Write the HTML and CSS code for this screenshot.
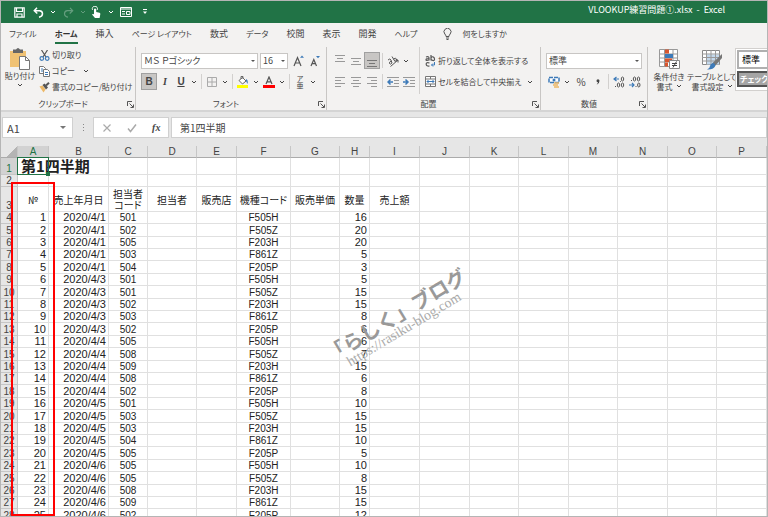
FILE: index.html
```
<!DOCTYPE html>
<html lang="ja">
<head>
  <meta charset="utf-8">
  <meta name="viewport" content="width=device-width, initial-scale=1">
  <title>VLOOKUP練習問題①.xlsx - Excel</title>
  <link rel="stylesheet" href="styles.css">
</head>
<body>
  <svg class="defs" width="0" height="0">
    <symbol id="down" viewBox="0 0 6 6"><path d="M1 2l2 2 2-2" fill="none" stroke="currentColor"/></symbol>
    <symbol id="launcher" viewBox="0 0 7 7"><path d="M.5 5V.5H5M2.500 2.500L6 6M6.500 3.500v3h-3" fill="none" stroke="#555"/></symbol>
  </svg>
  <div class="window">
    <header class="titlebar">
      <div class="quick">
        <button type="button" aria-label="保存"><svg width="11" height="11" viewBox="0 0 11 11"><path d="M.8.8h9.400v9.400H.8zM2.500 1v3.500h6V1M3 10V7h5v3" fill="none" stroke="#fff" stroke-width="1.200"/></svg></button>
        <button type="button" aria-label="元に戻す"><svg width="11" height="11" viewBox="0 0 11 11"><path d="M4 .8L1.300 3.700 4.300 6.500M1.500 3.700H6.500q3 .3 3 3t-3.500 3.500" fill="none" stroke="#fff" stroke-width="1.500"/></svg></button>
        <button type="button" class="caret" aria-label="履歴"><svg width="6" height="6"><use href="#down"/></svg></button>
        <button type="button" class="dim" aria-label="やり直し"><svg width="11" height="11" viewBox="0 0 11 11"><path d="M7 .8l2.700 2.900L6.700 6.500M9.500 3.700H4.500q-3 .3-3 3T5 10.200" fill="none" stroke="#fff" stroke-width="1.200"/></svg></button>
        <button type="button" class="caret dim" aria-label="やり直し履歴"><svg width="6" height="6"><use href="#down"/></svg></button>
        <button type="button" class="touch" aria-label="タッチ"><svg width="11" height="12" viewBox="0 0 11 12"><path d="M1.500 3.800a2.600 2.600 0 1 1 4.800 0" fill="none" stroke="#fff"/><path d="M3 3q1-1.200 2.200 0v3l3.300.8Q9.500 7 9.300 8.200L8.600 12H4L1 8.500q.5-1 2-.3z" fill="#fff"/></svg></button>
        <button type="button" class="caret" aria-label="タッチの設定"><svg width="6" height="6"><use href="#down"/></svg></button>
        <button type="button" aria-label="フォーム"><svg width="12" height="10" viewBox="0 0 12 10"><path d="M.5.5h11v9H.5zM0 2h12M2 4.500h3M2 7h3M6.500 4.500h3.500v3H6.500z" fill="none" stroke="#fff"/></svg></button>
        <button type="button" class="caret last" aria-label="カスタマイズ"><svg width="6" height="6" viewBox="0 0 6 6"><path d="M1 .5h4" stroke="#fff"/><path d="M1 2.500h4L3 5z" fill="#fff"/></svg></button>
      </div>
      <h1>VLOOKUP練習問題①.xlsx&nbsp; -&nbsp; Excel</h1>
    </header>

    <nav class="tabs">
      <a href="#" class="kana">ファイル</a>
      <a href="#" class="kana active">ホーム</a>
      <a href="#">挿入</a>
      <a href="#" class="kana">ページ レイアウト</a>
      <a href="#">数式</a>
      <a href="#" class="kana">データ</a>
      <a href="#">校閲</a>
      <a href="#">表示</a>
      <a href="#">開発</a>
      <a href="#" class="kana">ヘルプ</a>
      <a href="#" class="kana tell"><svg width="9" height="12" viewBox="0 0 9 12"><path d="M3 8.500Q3 7 1.800 6A3.500 3.500 0 1 1 7.200 6Q6 7 6 8.500zM3 10h3M3.500 11.500h2" fill="none" stroke="#555"/></svg>何をしますか</a>
    </nav>

    <div class="ribbon">
      <section class="group clipboard">
        <div class="tools">
          <button type="button" class="big">
            <svg width="22" height="22" viewBox="0 0 22 22"><path d="M1 3h16v16H1z" fill="#f0c274"/><path d="M4 1.500h3q2-3 4 0h3V5H4z" fill="#666"/><path d="M10.500 8.500h6l4 4v9h-10z" fill="#fff" stroke="#777"/><path d="M16.500 8.500v4h4" fill="none" stroke="#777"/></svg>
            <span>貼り付け</span>
            <svg width="6" height="6"><use href="#down"/></svg>
          </button>
          <div class="stack">
            <button type="button"><svg width="11" height="11" viewBox="0 0 11 11"><path d="M2.500 0L7 7M8.500 0L4 7" stroke="#555" stroke-width="1.200"/><circle cx="2.800" cy="8.500" r="1.800" fill="none" stroke="#3d7ab8" stroke-width="1.200"/><circle cx="8.200" cy="8.500" r="1.800" fill="none" stroke="#3d7ab8" stroke-width="1.200"/></svg>切り取り</button>
            <button type="button"><svg width="11" height="11" viewBox="0 0 11 11"><path d="M.5.500h4l2 2v5h-6z" fill="#fff" stroke="#777"/><path d="M4.500 3.500h4l2 2v5h-6z" fill="#fff" stroke="#777"/><path d="M2 3h2M2 5h2M6 6.500h3M6 8.500h3" stroke="#3d7ab8"/></svg>コピー<svg class="gap" width="6" height="6"><use href="#down"/></svg></button>
            <button type="button"><svg width="11" height="11" viewBox="0 0 11 11"><path d="M.5 4.500l3-1 3 4-2 3z" fill="#edb866"/><path d="M3.500 3l2-1.500L9 5.500 7 7.500z" fill="#555"/><path d="M7 3.500L10 .8" stroke="#555" stroke-width="2"/></svg>書式のコピー/貼り付け</button>
          </div>
        </div>
        <footer><span>クリップボード</span><button type="button" aria-label="クリップボードの詳細"><svg width="7" height="7"><use href="#launcher"/></svg></button></footer>
      </section>

      <section class="group font">
        <div class="tools lines">
          <div class="line">
            <label class="pick face"><select aria-label="フォント"><option>ＭＳ Ｐゴシック</option></select></label>
            <label class="pick size"><select aria-label="サイズ"><option>16</option></select></label>
            <button type="button" class="icon" aria-label="拡大"><svg width="12" height="12" viewBox="0 0 12 12"><path d="M1 11L4.500 2.500 8 11M2.300 8h4.400" fill="none" stroke="#555" stroke-width="1.200"/><path d="M7 2.800h4L9 .5z" fill="#3d7ab8"/></svg></button>
            <button type="button" class="icon" aria-label="縮小"><svg width="12" height="12" viewBox="0 0 12 12"><path d="M2 11l2.800-6.500L7.500 11M3 8.700h3.500" fill="none" stroke="#555" stroke-width="1.200"/><path d="M7 1h4L9 3.300z" fill="#3d7ab8"/></svg></button>
          </div>
          <div class="line">
            <button type="button" class="icon on"><b>B</b></button>
            <button type="button" class="icon"><i>I</i></button>
            <button type="button" class="icon"><u>U</u></button>
            <button type="button" class="caret" aria-label="下線"><svg width="6" height="6"><use href="#down"/></svg></button>
            <span class="sep"></span>
            <button type="button" class="icon" aria-label="罫線"><svg width="10" height="10" viewBox="0 0 10 10"><path d="M.5.500h9v9h-9zM5 0v10M0 5h10" fill="none" stroke="#aaa"/></svg></button>
            <button type="button" class="caret" aria-label="罫線の種類"><svg width="6" height="6"><use href="#down"/></svg></button>
            <span class="sep"></span>
            <button type="button" class="icon" aria-label="塗りつぶし"><svg width="12" height="12" viewBox="0 0 12 12"><path d="M2 4.500L5.500 1.500 9 5 5.500 8zM4 3V.5h2V3" fill="#fff" stroke="#666"/><path d="M9 3q2.500 1 1.500 5L9 5z" fill="#3d7ab8"/><path d="M0 9h11v3H0z" fill="#ff0"/></svg></button>
            <button type="button" class="caret" aria-label="塗りつぶしの色"><svg width="6" height="6"><use href="#down"/></svg></button>
            <button type="button" class="icon" aria-label="フォントの色"><svg width="12" height="12" viewBox="0 0 12 12"><path d="M3 8l3-7 3 7M4 5.800h4" fill="none" stroke="#555" stroke-width="1.200"/><path d="M0 9h12v3H0z" fill="red"/></svg></button>
            <button type="button" class="caret" aria-label="色の選択"><svg width="6" height="6"><use href="#down"/></svg></button>
            <span class="sep"></span>
            <button type="button" class="icon ruby"><span>ア</span><span>亜</span></button>
            <button type="button" class="caret" aria-label="ふりがな"><svg width="6" height="6"><use href="#down"/></svg></button>
          </div>
        </div>
        <footer><span>フォント</span><button type="button" aria-label="フォントの詳細"><svg width="7" height="7"><use href="#launcher"/></svg></button></footer>
      </section>

      <section class="group align">
        <div class="tools">
          <div class="lines">
            <div class="line">
              <button type="button" class="icon" aria-label="上揃え"><svg width="10" height="12" viewBox="0 0 10 12"><path d="M0 .5h10M2 3.500h6M0 6.500h10" stroke="#999"/></svg></button>
              <button type="button" class="icon" aria-label="上下中央揃え"><svg width="10" height="12" viewBox="0 0 10 12"><path d="M0 3.500h10M2 6.500h6M0 9.500h10" stroke="#999"/></svg></button>
              <button type="button" class="icon on" aria-label="下揃え"><svg width="10" height="12" viewBox="0 0 10 12"><path d="M0 5.500h10M2 8.500h6M0 11.500h10" stroke="#777"/></svg></button>
              <span class="sep"></span>
              <button type="button" class="icon" aria-label="方向"><svg width="12" height="12" viewBox="0 0 12 12"><path d="M1 5q2-2 3 0l1 3M4 6Q2 7 2.500 8.500T5 8M5 1.500l3 5M6.500 4q2-1.500 3 0T8 6.500M3.500 11.500L11 5M8.500 5H11v2.500" fill="none" stroke="#555"/></svg></button>
              <button type="button" class="caret" aria-label="方向の選択"><svg width="6" height="6"><use href="#down"/></svg></button>
            </div>
            <div class="line">
              <button type="button" class="icon" aria-label="左揃え"><svg width="10" height="10" viewBox="0 0 10 10"><path d="M0 .5h10M0 3.500h6M0 6.500h10M0 9.500h6" stroke="#999"/></svg></button>
              <button type="button" class="icon" aria-label="中央揃え"><svg width="10" height="10" viewBox="0 0 10 10"><path d="M0 .5h10M2 3.500h6M0 6.500h10M2 9.500h6" stroke="#999"/></svg></button>
              <button type="button" class="icon" aria-label="右揃え"><svg width="10" height="10" viewBox="0 0 10 10"><path d="M0 .5h10M4 3.500h6M0 6.500h10M4 9.500h6" stroke="#999"/></svg></button>
              <span class="sep"></span>
              <button type="button" class="icon" aria-label="インデントを減らす"><svg width="12" height="10" viewBox="0 0 12 10"><path d="M0 .5h12M7 3.500h5M7 6.500h5M0 9.500h12" stroke="#999"/><path d="M6 5H1.500M3.500 2.500L1 5l2.500 2.500" fill="none" stroke="#3d7ab8" stroke-width="1.500"/></svg></button>
              <button type="button" class="icon" aria-label="インデントを増やす"><svg width="12" height="10" viewBox="0 0 12 10"><path d="M0 .5h12M7 3.500h5M7 6.500h5M0 9.500h12" stroke="#999"/><path d="M0 5h4.500M2.500 2.500L5 5 2.500 7.500" fill="none" stroke="#3d7ab8" stroke-width="1.500"/></svg></button>
            </div>
          </div>
          <div class="lines wrap">
            <div class="line">
              <button type="button"><svg width="11" height="12" viewBox="0 0 11 12"><path d="M1 2q3-1 3 1v2.500M4 3.500Q1 3.500 1 4.700T4 5M6 0v5.500M6 3q.5-1.500 2-1.200T9.500 4 8 5.500 6 4.500M4.500 8Q1 7 1.200 9.200T4.500 11" fill="none" stroke="#555" stroke-width="1.200"/><path d="M9.500 7v3H6.500M8 8.500L6.500 10 8 11.500" fill="none" stroke="#3d7ab8"/></svg>折り返して全体を表示する</button>
            </div>
            <div class="line">
              <button type="button"><svg width="11" height="11" viewBox="0 0 11 11"><path d="M.5.500h10v10H.5zM0 3h11M0 8h11M5.500 0v3M5.500 8v3" fill="#fff" stroke="#777"/><path d="M2 5.500h7M3.500 4L2 5.500 3.500 7M7.500 4L9 5.500 7.500 7" fill="none" stroke="#3d7ab8"/></svg>セルを結合して中央揃え<svg class="near" width="6" height="6"><use href="#down"/></svg></button>
            </div>
          </div>
        </div>
        <footer><span>配置</span><button type="button" aria-label="配置の詳細"><svg width="7" height="7"><use href="#launcher"/></svg></button></footer>
      </section>

      <section class="group number">
        <div class="tools lines">
          <div class="line">
            <label class="pick"><select aria-label="表示形式"><option>標準</option></select></label>
          </div>
          <div class="line">
            <button type="button" class="icon" aria-label="通貨"><svg width="12" height="12" viewBox="0 0 12 12"><path d="M1 1.500h10v5H1z" fill="#fff" stroke="#3d7ab8" stroke-width="1.500" stroke-dasharray="4 1"/><circle cx="6" cy="4" r="1.500" fill="#3d7ab8"/><path d="M6 7h5M5 9h5M6 11h5" stroke="#edb866" stroke-width="1.500"/></svg></button>
            <button type="button" class="caret" aria-label="通貨の選択"><svg width="6" height="6"><use href="#down"/></svg></button>
            <button type="button" class="icon percent">%</button>
            <button type="button" class="icon"><svg width="4" height="6" viewBox="0 0 4 6"><path d="M.5 1.800a1.500 1.500 0 1 1 3 0Q3.500 4.500 1 5.500L.8 5Q2 4.300 2 3.300.5 3.300.5 1.800z" fill="#444"/></svg></button>
            <span class="sep"></span>
            <button type="button" class="icon" aria-label="小数点以下を増やす"><svg width="12" height="12" viewBox="0 0 12 12"><path d="M6 3H1.500M3.500 1L1 3l2.500 2" fill="none" stroke="#3d7ab8" stroke-width="1.200"/><path d="M7 5.500h.8M2 10.500h1" stroke="#555"/><ellipse cx="9.500" cy="3" rx="1.200" ry="2" fill="none" stroke="#555"/><ellipse cx="5.500" cy="9" rx="1.200" ry="2" fill="none" stroke="#555"/><ellipse cx="9.500" cy="9" rx="1.200" ry="2" fill="none" stroke="#555"/></svg></button>
            <button type="button" class="icon" aria-label="小数点以下を減らす"><svg width="12" height="12" viewBox="0 0 12 12"><path d="M0 9h4.500M3 7l2 2-2 2" fill="none" stroke="#3d7ab8" stroke-width="1.200"/><path d="M2 4.500h1M6.500 10.500h1" stroke="#555"/><ellipse cx="5.500" cy="3" rx="1.200" ry="2" fill="none" stroke="#555"/><ellipse cx="9.500" cy="3" rx="1.200" ry="2" fill="none" stroke="#555"/><ellipse cx="9.800" cy="9" rx="1.200" ry="2" fill="none" stroke="#555"/></svg></button>
          </div>
        </div>
        <footer><span>数値</span><button type="button" aria-label="数値の詳細"><svg width="7" height="7"><use href="#launcher"/></svg></button></footer>
      </section>

      <section class="group styles">
        <div class="tools">
          <button type="button" class="big">
            <svg width="22" height="22" viewBox="0 0 22 22"><path d="M1.500 1.500h18v17h-18z" fill="#fff" stroke="#999"/><path d="M1 6h19M1 10h19M1 14h19M6.500 1v18M15 1v18" stroke="#999"/><path d="M7 1.500h4v4H7zM7 10.500h7v3.500H7zM7 14.500h3v4H7z" fill="#d8562f"/><path d="M7 6h8v4H7z" fill="#3d7ab8"/><path d="M11.500 12.500h10v8h-10z" fill="#fff" stroke="#888"/><path d="M14 15.500h5M14 17.500h5M15 19.500l3.500-6" stroke="#444"/></svg>
            <span>条件付き</span>
            <span>書式<svg class="near" width="6" height="6"><use href="#down"/></svg></span>
          </button>
          <button type="button" class="big">
            <svg width="22" height="22" viewBox="0 0 22 22"><path d="M1.500 2.500h17v14h-17z" fill="#fff" stroke="#888"/><path d="M6 6.500h12v10H6z" fill="#c3d8ec"/><path d="M1 6h18M1 9.500h18M1 13h18M5.500 2v15M10 2v15M14.500 2v15" stroke="#999"/><path d="M21 6v4l-7 8-3-2.500z" fill="#777"/><path d="M12 15q3 1 2 3.500Q12 22 6 21.500q3-1.500 3-3.500t3-3z" fill="#3d7ab8"/></svg>
            <span>テーブルとして</span>
            <span>書式設定<svg class="near" width="6" height="6"><use href="#down"/></svg></span>
          </button>
          <div class="gallery">
            <button type="button" class="normal">標準</button>
            <button type="button" class="check">チェック</button>
          </div>
        </div>
      </section>
    </div>

    <div class="formula">
      <div class="namebox"><input type="text" value="A1" aria-label="名前ボックス"><button type="button" aria-label="名前の一覧"></button></div>
      <span class="dots"><i></i><i></i><i></i></span>
      <div class="entry">
        <button type="button" aria-label="キャンセル"><svg width="10" height="10" viewBox="0 0 10 10"><path d="M1.500 1.500l7 7M8.500 1.500l-7 7" stroke="#aaa" stroke-width="1.200"/></svg></button>
        <button type="button" aria-label="入力"><svg width="10" height="10" viewBox="0 0 10 10"><path d="M1 5.500l2.500 3 5.500-7" fill="none" stroke="#aaa" stroke-width="1.500"/></svg></button>
        <button type="button" class="fx">fx</button>
      </div>
      <input type="text" class="value" value="第1四半期" aria-label="数式バー">
    </div>

    <main class="sheet">
      <table>
        <colgroup>
          <col class="w-head"><col class="w-a"><col class="w-b"><col class="w-c"><col class="w-m"><col class="w-e"><col class="w-f"><col class="w-m"><col class="w-h"><col class="w-l"><col class="w-l"><col class="w-m"><col class="w-l"><col class="w-m"><col class="w-l"><col class="w-m"><col class="w-l">
        </colgroup>
        <thead>
          <tr><th class="corner"></th><th class="picked">A</th><th>B</th><th>C</th><th>D</th><th>E</th><th>F</th><th>G</th><th>H</th><th>I</th><th>J</th><th>K</th><th>L</th><th>M</th><th>N</th><th>O</th><th>P</th></tr>
        </thead>
        <tbody>
          <tr class="row-title"><th class="picked">1</th><td class="cursor"><span>第1四半期</span></td><td></td><td></td><td></td><td></td><td></td><td></td><td></td><td></td><td></td><td></td><td></td><td></td><td></td><td></td><td></td></tr>
          <tr><th>2</th><td></td><td></td><td></td><td></td><td></td><td></td><td></td><td></td><td></td><td></td><td></td><td></td><td></td><td></td><td></td><td></td></tr>
          <tr class="row-names"><th>3</th><td>№</td><td>売上年月日</td><td>担当者<br>コード</td><td>担当者</td><td>販売店</td><td>機種コード</td><td>販売単価</td><td>数量</td><td>売上額</td><td></td><td></td><td></td><td></td><td></td><td></td><td></td></tr>
        </tbody>
        <tbody id="sales"></tbody>
      </table>
      <div class="frame"></div>
      <div class="mark"><p>「らしく」ブログ</p><p class="url">https://rasiku-blog.com</p></div>
    </main>
  </div>
  <script src="sales.js"></script>
</body>
</html>
```
FILE: styles.css
```
*{
  margin: 0;
  padding: 0;
  box-sizing: border-box;
}
body{
  font-family: 'Noto Sans CJK JP',sans-serif;
  font-feature-settings: "palt";
  font-size: 8px;
  line-height: 10px;
  color: #444;
}
button,input,select{
  font: inherit;
  font-feature-settings: inherit;
  color: inherit;
  background: transparent;
  border: none;
  outline: none;
  appearance: none;
}
button{
  display: flex;
  align-items: center;
  justify-content: center;
  white-space: nowrap;
}
svg{
  display: block;
  flex: none;
}
.defs{
  position: absolute;
}
.window{
  display: flex;
  flex-direction: column;
  height: 100vh;
  overflow: hidden;
  border: 1px solid #b5b5b5;
}

/* title bar */
.titlebar{
  display: flex;
  justify-content: space-between;
  height: 22px;
  flex: none;
  background: #217346;
  color: white;
}
.quick{
  display: flex;
  align-items: center;
  padding-left: 10px;
}
.quick button{
  width: 16px;
  margin-right: 3px;
}
.quick .caret{
  width: 8px;
}
.quick .touch{
  margin-left: -2px;
}
.quick .last{
  margin-left: 4px;
}
.quick .dim{
  opacity: 0.3;
}
.titlebar h1{
  font-size: 9px;
  font-weight: 400;
  line-height: 18px;
  padding-right: 42px;
}

/* tabs */
.tabs{
  display: flex;
  flex: none;
  gap: 18px;
  height: 24px;
  padding: 0 0 3px 8px;
  background: #f3f2f1;
}
.tabs a{
  display: flex;
  align-items: center;
  color: #444;
  font-size: 9px;
  text-decoration: none;
  white-space: nowrap;
  border-top: 2px solid transparent;
  border-bottom: 2px solid transparent;
}
.tabs .kana{
  font-size: 8px;
}
.tabs .active{
  font-weight: 700;
  color: #333;
  border-bottom-color: #217346;
}
.tabs .tell{
  margin-left: 8px;
  gap: 10px;
}

/* ribbon */
.ribbon{
  display: flex;
  flex: none;
  height: 63px;
  background: #f3f2f1;
  overflow: hidden;
}
.group{
  display: flex;
  flex-direction: column;
  flex: none;
  border-right: 1px solid #c8c6c4;
}
.group footer{
  display: flex;
  align-items: center;
  height: 12px;
}
.group footer span{
  flex: 1;
  text-align: center;
}
.group footer button{
  width: 10px;
}
.tools{
  display: flex;
  flex: 1;
}
.clipboard{
  width: 135px;
}
.font{
  width: 191px;
}
.align{
  width: 214px;
}
.number{
  width: 107px;
}
.styles{
  flex: 1;
  border: none;
}
.big{
  flex-direction: column;
  justify-content: flex-start;
  padding-top: 1px;
}
.big span{
  display: flex;
  align-items: center;
}
.clipboard .big{
  width: 38px;
}
.clipboard .big span{
  line-height: 12px;
}
.stack{
  display: flex;
  flex-direction: column;
}
.stack button{
  justify-content: flex-start;
  height: 16px;
  gap: 2px;
}
.gap{
  margin-left: 6px;
}
.near{
  margin-left: 3px;
}
.lines{
  display: flex;
  flex-direction: column;
  gap: 4px;
  padding: 5px 0 0 5px;
}
.line{
  display: flex;
  align-items: center;
  height: 17px;
}
.line .icon{
  width: 16px;
  height: 17px;
  font-size: 10px;
}
.line .on{
  background: #c8c6c4;
  border: 1px solid #a0a0a0;
}
.line .caret{
  width: 10px;
}
.line .icon b,.line .icon i,.line .icon u{
  font-family: 'Liberation Sans',sans-serif;
  font-weight: 700;
}
.line .icon i{
  font-family: 'Liberation Serif',serif;
}
.line .percent{
  width: 18px;
}
.line .ruby{
  flex-direction: column;
  font-size: 7px;
  line-height: 7px;
}
.sep{
  width: 1px;
  height: 15px;
  margin: 0 2px;
  background: #d2d0ce;
}
.pick{
  display: flex;
  position: relative;
  height: 16px;
  background: white;
  border: 1px solid #c8c6c4;
}
.pick::after{
  content: '';
  position: absolute;
  right: 2px;
  top: 6px;
  border: 2px solid transparent;
  border-top-color: #555;
}
.pick select{
  width: 100%;
  padding-left: 2px;
  font-size: 9px;
}
.face{
  width: 117px;
}
.size{
  width: 28px;
  margin: 0 3px 0 2px;
}
.number .pick{
  width: 96px;
}
.align .wrap{
  margin-left: 2px;
  padding-left: 5px;
  margin-bottom: 4px;
  border-left: 1px solid #d2d0ce;
}
.wrap button{
  gap: 2px;
}
.styles .big{
  width: 44px;
}
.styles .big:first-child{
  width: 42px;
}
.styles .big svg:first-child{
  margin-bottom: 2px;
}
.gallery{
  display: flex;
  flex-direction: column;
  gap: 2px;
  flex: none;
  width: 80px;
  height: 43px;
  margin: 1px 0 0 1px;
  padding: 1px;
  background: white;
  border: 1px solid #d2d0ce;
}
.gallery button{
  justify-content: flex-start;
  padding-left: 3px;
  font-size: 9px;
}
.gallery .normal{
  height: 19px;
  border: 2px solid #b0b0b0;
  color: black;
}
.gallery .check{
  height: 16px;
  padding-left: 1px;
  font-size: 8px;
  background: #a5a5a5;
  border: 2px solid #555;
  color: white;
  font-weight: 700;
}

/* formula bar */
.formula{
  display: flex;
  flex: none;
  align-items: center;
  height: 36px;
  padding: 0 0 3px 1px;
  background: #e6e6e6;
  border-top: 2px solid #d4d4d4;
}
.namebox,.entry,.value{
  display: flex;
  height: 21px;
  background: white;
  border: 1px solid #d0d0d0;
}
.namebox{
  width: 71px;
}
.namebox input{
  width: 54px;
  padding-left: 4px;
  font-size: 11px;
}
.namebox button::after{
  content: '';
  margin: 3px 0 0 3px;
  border: 3px solid transparent;
  border-top-color: #777;
}
.dots{
  display: flex;
  flex-direction: column;
  gap: 2px;
  width: 20px;
  align-items: center;
}
.dots i{
  width: 1px;
  height: 1px;
  background: #888;
}
.entry{
  width: 76px;
  justify-content: space-around;
}
.entry .fx{
  font: italic 700 10px 'Liberation Serif',serif;
}
.value{
  flex: 1;
  min-width: 0;
  margin-left: 2px;
  padding-left: 8px;
  font-size: 10px;
}

/* sheet */
.sheet{
  flex: 1;
  position: relative;
  overflow: hidden;
  background: white;
}
table{
  width: 0;
  table-layout: fixed;
  border-collapse: separate;
  border-spacing: 0;
  font-family: 'Liberation Sans','Noto Sans CJK JP',sans-serif;
  font-size: 10px;
  color: #222;
}
.w-head{ width: 17px; }
.w-a{ width: 31px; }
.w-b{ width: 60px; }
.w-c{ width: 39px; }
.w-e{ width: 40px; }
.w-f{ width: 54px; }
.w-h{ width: 30px; }
.w-m{ width: 49px; }
.w-l{ width: 50px; }
th,td{
  height: 12px;
  border-right: 1px solid #e0e0e0;
  border-bottom: 1px solid #e0e0e0;
  line-height: 11px;
  white-space: nowrap;
  text-align: center;
}
th{
  background: #e6e6e6;
  border-color: #c6c6c6;
  font-weight: 400;
  vertical-align: bottom;
  color: #444;
}
thead th{
  border-bottom-color: #ababab;
}
th.picked{
  background: #d2d2d2;
  color: #217346;
}
.corner{
  background: linear-gradient(135deg,#e6e6e6 60%,#b4b4b4 60%);
}
.row-title td,.row-title th{
  height: 17px;
}
.row-names td,.row-names th{
  height: 25px;
}
.row-names td{
  font-family: 'Noto Sans CJK JP',sans-serif;
}
.cursor{
  position: relative;
}
.cursor span{
  display: block;
  width: 20px;
  padding-left: 3px;
  font-family: 'Noto Sans CJK JP',sans-serif;
  font-size: 15px;
  font-weight: 700;
  line-height: 16px;
}
.cursor::before{
  content: '';
  position: absolute;
  inset: -1px;
  border: 1px solid #217346;
}
.cursor::after{
  content: '';
  position: absolute;
  right: -2px;
  bottom: -2px;
  width: 4px;
  height: 4px;
  background: #217346;
}
#sales tr:nth-child(5n+2) td,#sales tr:nth-child(5n+5) td{
  height: 13px;
}
#sales .num,#sales .date{
  text-align: right;
  padding-right: 2px;
  font-size: 11px;
}
.frame{
  position: absolute;
  top: 36px;
  bottom: 0;
  left: 10px;
  width: 44px;
  border: 2px solid red;
}
.mark{
  position: absolute;
  top: 158px;
  left: 318px;
  width: 160px;
  font-size: 20px;
  font-weight: 700;
  line-height: 20px;
  color: #999;
  text-align: center;
  white-space: nowrap;
  font-feature-settings: normal;
  transform: rotate(-31deg);
}
.mark .url{
  font: 14px/14px 'Liberation Serif',serif;
  color: #aaa;
}
```
FILE: sales.js
```
// [date, staff code, model, quantity]
const sales = [
  ["2020/4/1", 501, "F505H", 16],
  ["2020/4/1", 502, "F505Z", 20],
  ["2020/4/1", 505, "F203H", 20],
  ["2020/4/1", 503, "F861Z", 5],
  ["2020/4/1", 504, "F205P", 3],
  ["2020/4/3", 501, "F505H", 5],
  ["2020/4/3", 501, "F505Z", 15],
  ["2020/4/3", 502, "F203H", 15],
  ["2020/4/3", 503, "F861Z", 8],
  ["2020/4/3", 502, "F205P", 6],
  ["2020/4/4", 505, "F505H", 6],
  ["2020/4/4", 508, "F505Z", 7],
  ["2020/4/4", 509, "F203H", 15],
  ["2020/4/4", 508, "F861Z", 6],
  ["2020/4/4", 502, "F205P", 8],
  ["2020/4/5", 501, "F505H", 10],
  ["2020/4/5", 503, "F505Z", 15],
  ["2020/4/5", 503, "F203H", 15],
  ["2020/4/5", 504, "F861Z", 10],
  ["2020/4/5", 505, "F205P", 5],
  ["2020/4/6", 505, "F505H", 10],
  ["2020/4/6", 505, "F505Z", 8],
  ["2020/4/6", 508, "F203H", 15],
  ["2020/4/6", 509, "F861Z", 15],
  ["2020/4/6", 502, "F205P", 12]
];

const body = document.getElementById("sales");

sales.forEach(function(sale, i)
{
  const tr = document.createElement("tr");
  tr.innerHTML = "<th>" + (i + 4) + "</th>" +
    "<td class='num'>" + (i + 1) + "</td>" +
    "<td class='date'>" + sale[0] + "</td>" +
    "<td>" + sale[1] + "</td><td></td><td></td>" +
    "<td>" + sale[2] + "</td><td></td>" +
    "<td class='num'>" + sale[3] + "</td>" +
    "<td></td>".repeat(8);
  body.appendChild(tr);
});
```
